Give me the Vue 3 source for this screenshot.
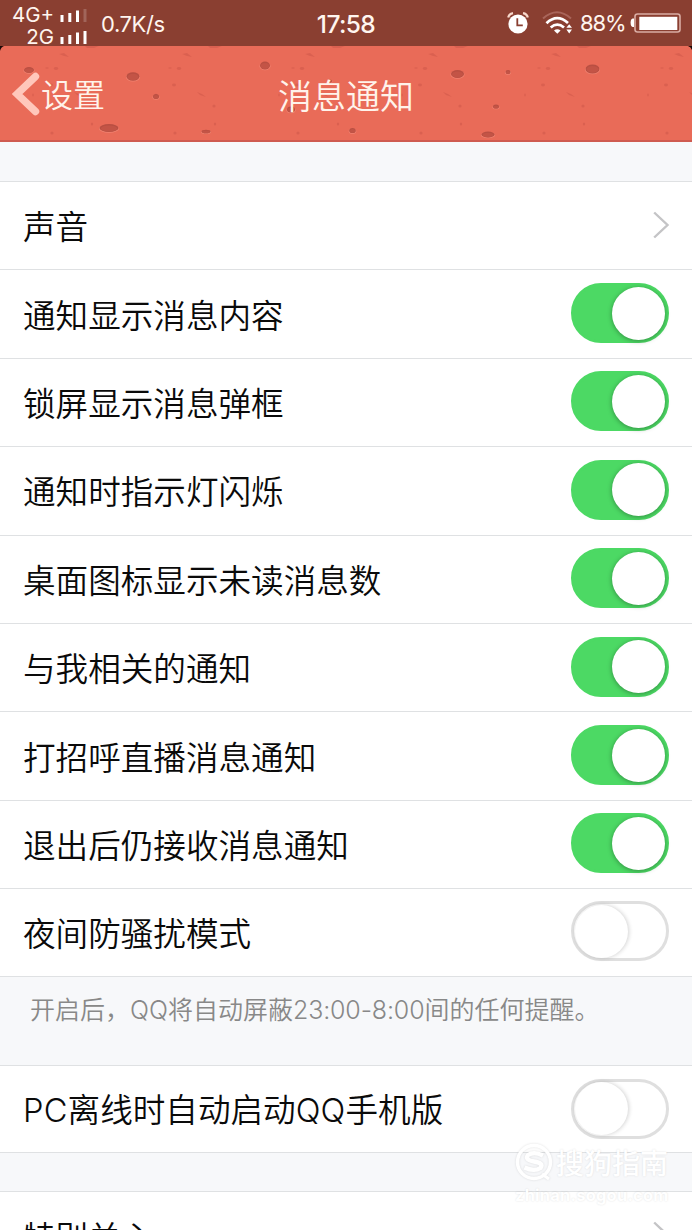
<script setup>
import { ref } from 'vue'

const settings = ref([
  { label: '通知显示消息内容', on: true },
  { label: '锁屏显示消息弹框', on: true },
  { label: '通知时指示灯闪烁', on: true },
  { label: '桌面图标显示未读消息数', on: true },
  { label: '与我相关的通知', on: true },
  { label: '打招呼直播消息通知', on: true },
  { label: '退出后仍接收消息通知', on: true },
  { label: '夜间防骚扰模式', on: false },
])

const pcOffline = ref(false)

const toggle = (item) => {
  item.on = !item.on
}

// craters in the header skin: x, y, rx, ry
const craters = [
  [29, 24, 5, 3],
  [133, 30.5, 6.5, 4.2],
  [156, 50.5, 3, 2.5],
  [109, 82, 9.5, 4],
  [206, 85.5, 4.5, 1.8],
  [265, 19.5, 5, 4],
  [291, 63.5, 4, 3],
  [330, 35, 2, 1.6],
  [352.5, 84.5, 3.2, 2.6],
  [457.5, 28, 6.5, 4],
  [508, 26, 2.5, 2],
  [496, 60.5, 3, 2],
  [488, 88.5, 6.5, 3],
  [592.5, 23, 7, 4.6],
]

// small marks, the same group repeats over the header
const tiles = [-67, 56, 179, 302, 425, 548, 671]
</script>

<template>
  <div class="phone">
    <div class="statusbar">
      <div class="carriers">
        <div class="carrier">
          <span>4G+</span>
          <svg width="27" height="13" viewBox="0 0 27 13">
            <g fill="#fff">
              <rect x="0.5" y="6" width="3" height="7" />
              <rect x="8.3" y="4" width="3" height="9" />
              <rect x="16" y="1.5" width="3" height="11.5" />
              <rect x="23.5" y="0" width="3" height="13" opacity="0.2" />
            </g>
          </svg>
        </div>
        <div class="carrier">
          <span>2G</span>
          <svg width="27" height="13" viewBox="0 0 27 13">
            <g fill="#fff">
              <rect x="0.5" y="6" width="3" height="7" />
              <rect x="8.3" y="4" width="3" height="9" />
              <rect x="16" y="1.5" width="3" height="11.5" />
              <rect x="23.5" y="0" width="3" height="13" />
            </g>
          </svg>
        </div>
      </div>
      <span class="speed">0.7K/s</span>
      <span class="clock">17:58</span>
      <div class="status-icons">
        <svg class="alarm" width="22" height="22" viewBox="0 0 22 22">
          <circle cx="11" cy="12" r="9.6" fill="#fff" />
          <path d="M1.2 5.6 Q2 1.8 6 1.2 M20.8 5.6 Q20 1.8 16 1.2" fill="none" stroke="#f8d8cb" stroke-width="2.2" />
          <path d="M10.3 6.2 V13.3 H15.8" fill="none" stroke="#8a3f31" stroke-width="1.8" />
        </svg>
        <svg class="wifi" width="32" height="24" viewBox="0 0 32 24">
          <path d="M1 7.5 Q15 -5 29 7.5" fill="none" stroke="#a9655a" stroke-width="2" />
          <path d="M4.5 12.2 Q15 2.2 26 12" fill="none" stroke="#fff" stroke-width="2.8" />
          <path d="M8.7 16.5 Q15.3 10.8 22 16.5" fill="none" stroke="#fff" stroke-width="2.8" />
          <path d="M12 19.6 Q15.3 16.8 18.6 19.6 L15.3 22.8 Z" fill="#fff" />
          <path d="M24.4 16.8 L27.2 13.2 L30 16.8 Z M24.4 18.6 L27.2 22.4 L30 18.6 Z" fill="#fff" />
        </svg>
        <span class="percent">88%</span>
        <svg class="battery" width="51" height="20" viewBox="0 0 51 20">
          <path d="M4 5.5 V14 H2.6 Q0.6 13.5 0.6 9.7 Q0.6 6 2.6 5.5 Z" fill="#fff" />
          <rect x="5" y="1" width="45" height="18" rx="2.5" fill="none" stroke="#d9ada4" stroke-width="1.6" />
          <rect x="9.3" y="3.8" width="38" height="13.2" fill="#fff" />
        </svg>
      </div>
    </div>

    <div class="header">
      <svg class="skin" width="692" height="96" viewBox="0 0 692 96">
        <g v-for="x in tiles" :key="x" :transform="`translate(${x} 0)`" fill="#bd4b40" opacity="0.32">
          <path d="M3 8 l5 -1 l5 4 l-5 -1 Z" />
          <path d="M29 0 h14 l-5 2 h-7 Z" />
          <path d="M-1 21.5 l3 0.5 l-1 1.5 l-3 -0.5 Z" />
          <path d="M18 46 l5 2 l4 3 l-6 -2 Z" />
          <ellipse cx="0" cy="22.5" rx="2.2" ry="1.4" />
          <ellipse cx="-9" cy="22" rx="1.8" ry="0.8" />
          <ellipse cx="-5" cy="39" rx="2" ry="1.4" />
          <ellipse cx="35" cy="60" rx="1.6" ry="1.6" />
          <ellipse cx="-4" cy="87" rx="1.6" ry="1.5" />
          <ellipse cx="36" cy="78" rx="1.2" ry="1.6" />
          <ellipse cx="-23" cy="49" rx="0.8" ry="1.4" />
        </g>
        <g v-for="(c, i) in craters" :key="i">
          <ellipse :cx="c[0]" :cy="c[1] + 0.7" :rx="c[2] + 0.5" :ry="c[3]" fill="#f18371" />
          <ellipse :cx="c[0]" :cy="c[1]" :rx="c[2]" :ry="c[3]" fill="#b94f42" />
          <ellipse :cx="c[0]" :cy="c[1] + 0.4" :rx="c[2] * 0.85" :ry="c[3] * 0.75" fill="#c35446" />
        </g>
        <path d="M0 0 H4 Q1 1 0 5 Z M692 0 H688 Q691 1 692 4 Z" fill="#1c0907" />
      </svg>
      <div class="back">
        <svg width="28" height="44" viewBox="0 0 28 44">
          <path d="M23.5 4.5 L5 22 L23.5 39.5" fill="none" stroke="#ffc7bb" stroke-width="7.4" stroke-linecap="round" stroke-linejoin="miter" />
        </svg>
        <span>设置</span>
      </div>
      <h1>消息通知</h1>
    </div>

    <div class="list first">
      <div class="row">
        <span>声音</span>
        <svg class="arrow" width="18" height="30" viewBox="0 0 18 30">
          <path d="M2.2 2.5 L15.5 15 L2.2 27.5" fill="none" stroke="#c4c4c6" stroke-width="2.4" />
        </svg>
      </div>
      <div v-for="item in settings" :key="item.label" class="row">
        <span>{{ item.label }}</span>
        <div class="switch" :class="{ on: item.on }" @click="toggle(item)">
          <div class="knob"></div>
        </div>
      </div>
    </div>

    <p class="note">开启后，QQ将自动屏蔽<span class="hours">23:00-8:00</span>间的任何提醒。</p>

    <div class="list pc">
      <div class="row">
        <span><span class="latin">PC</span>离线时自动启动<span class="latin">QQ</span>手机版</span>
        <div class="switch" :class="{ on: pcOffline }" @click="pcOffline = !pcOffline">
          <div class="knob"></div>
        </div>
      </div>
    </div>

    <div class="list last">
      <div class="row">
        <span>特别关心</span>
        <svg class="arrow" width="18" height="30" viewBox="0 0 18 30">
          <path d="M2.2 2.5 L15.5 15 L2.2 27.5" fill="none" stroke="#c4c4c6" stroke-width="2.4" />
        </svg>
      </div>
    </div>

    <div class="watermark">
      <div class="mark-top">
        <svg width="38" height="38" viewBox="0 0 38 38">
          <circle cx="19" cy="19" r="16.5" fill="none" stroke="#fff" stroke-width="3.4" />
          <path d="M28 12.5 Q19 8 13 12 Q9.5 17 19 18.5 Q29 20 25.5 25 Q19 29 9.5 24.5" fill="none" stroke="#fff" stroke-width="4.4" />
          <path d="M27 31 L34 36" stroke="#fff" stroke-width="3" />
        </svg>
        <span>搜狗指南</span>
      </div>
      <div class="mark-url">zhinan.sogou.com</div>
    </div>
  </div>
</template>

<style>
body {
  margin: 0;
  overflow: hidden;
}
</style>

<style scoped>
.phone {
  position: relative;
  width: 692px;
  height: 1230px;
  overflow: hidden;
  background: #f7f8fa;
  color: #0a0a0a;
  font-family: Inter, "Noto Sans CJK SC", sans-serif;
}

/* status bar */
.statusbar {
  position: relative;
  display: flex;
  height: 46px;
  background: #8a3f31;
  color: #fff5ef;
}

.carriers {
  width: 87px;
  padding-top: 4px;
}

.carrier {
  display: flex;
  justify-content: flex-end;
  align-items: center;
  gap: 6px;
  height: 22px;
  font-size: 20.5px;
  line-height: 22px;
}

.speed {
  margin-left: 14px;
  font-size: 22px;
  line-height: 48px;
  letter-spacing: -0.4px;
}

.clock {
  position: absolute;
  left: 0;
  right: 0;
  text-align: center;
  font-size: 24.5px;
  line-height: 49px;
  font-weight: 500;
  letter-spacing: -0.6px;
}

.status-icons {
  display: flex;
  align-items: center;
  margin-left: auto;
  padding-right: 11px;
}

.wifi {
  margin-left: 13px;
}

.percent {
  margin-left: 6px;
  margin-right: 6px;
  width: 44px;
  font-size: 22px;
  line-height: 48px;
  letter-spacing: -1.1px;
  white-space: nowrap;
}

/* header with the skin behind it */
.header {
  position: relative;
  height: 96px;
  box-sizing: border-box;
  background: #e96b58;
  border-bottom: 2px solid #cf5b50;
  color: #fff3eb;
}

.skin {
  position: absolute;
  top: 0;
  left: 0;
}

.back {
  position: relative;
  display: flex;
  align-items: center;
  width: 120px;
  height: 96px;
  padding-left: 12px;
  font-size: 32px;
  font-weight: 350;
}

.back span {
  margin: 0 0 3px 1px;
}

.header h1 {
  position: absolute;
  top: 0;
  left: 0;
  right: 0;
  margin: 0;
  text-align: center;
  font-size: 34px;
  line-height: 101px;
  font-weight: 350;
}

/* white groups */
.list {
  background: #fff;
  border-top: 1px solid #dfe1e3;
  border-bottom: 1px solid #dfe1e3;
}

.first {
  margin-top: 39px;
}

.last {
  margin-top: 38px;
}

.row {
  display: flex;
  justify-content: space-between;
  align-items: center;
  box-sizing: border-box;
  height: 88.4px;
  padding: 0 23px 2px;
  font-size: 32.6px;
  line-height: 48px;
  font-weight: 350;
}

.row > span {
  padding-top: 5px;
}

.row + .row {
  border-top: 1px solid #dfe1e3;
}

.first .row:first-child,
.first .row:last-child {
  height: 87.4px;
}

.pc .row {
  height: 86.4px;
  padding-bottom: 0;
}

.pc .row > span {
  padding-top: 2px;
}

.arrow {
  margin-right: -1px;
}

.latin {
  letter-spacing: 0.2px;
}

/* switch */
.switch {
  display: flex;
  align-items: center;
  box-sizing: border-box;
  width: 98px;
  height: 60px;
  padding: 0 1px;
  border: 3px solid #dfdfdf;
  border-radius: 30px;
  background: #fff;
}

.knob {
  width: 53px;
  height: 53px;
  border-radius: 50%;
  background: #fff;
  box-shadow: 1px 0 4px rgba(0, 0, 0, 0.18);
}

.switch.on {
  justify-content: flex-end;
  border-color: #4cd964;
  background: #4cd964;
}

.switch.on .knob {
  box-shadow: 0 1px 5px rgba(0, 0, 0, 0.35);
}

/* grey hint */
.note {
  height: 88px;
  box-sizing: border-box;
  margin: 0;
  padding: 15px 0 0 30px;
  color: #888;
  font-size: 25px;
  line-height: 36px;
  font-weight: 350;
  white-space: nowrap;
}

.hours {
  letter-spacing: -0.15px;
}

/* watermark bottom right */
.watermark {
  position: absolute;
  left: 515px;
  top: 1142px;
  color: #fff;
  text-shadow: 0 0 2px rgba(0, 0, 0, 0.12);
}

.mark-top {
  display: flex;
  align-items: center;
  gap: 3px;
  height: 40px;
  font-size: 28px;
  font-weight: 500;
}

.mark-top svg {
  filter: drop-shadow(0 0 1px rgba(0, 0, 0, 0.12));
}

.mark-url {
  margin-top: 2px;
  font-size: 16.5px;
  line-height: 22px;
  font-weight: 700;
  letter-spacing: 0.2px;
}
</style>
